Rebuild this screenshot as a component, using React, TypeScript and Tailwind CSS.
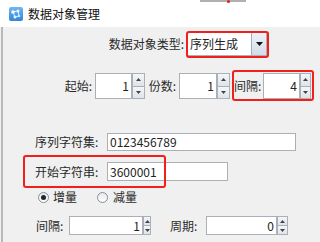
import React from 'react';

const Up = () => (
  <svg width="5" height="3" viewBox="0 0 5 3">
    <path d="M0 3 L2.5 0 L5 3 Z" fill="#444" />
  </svg>
);

const Down = () => (
  <svg width="5" height="3" viewBox="0 0 5 3">
    <path d="M0 0 L5 0 L2.5 3 Z" fill="#444" />
  </svg>
);

const Spinner = ({ value, box, btn, h }: { value: string; box: string; btn: string; h: string }) => (
  <div className={`flex ${h}`}>
    <div className={`${box} h-full bg-white border border-[#abb0b7] flex items-center justify-end pr-[2px] text-[12px] text-[#222]`}>
      {value}
    </div>
    <div className={`${btn} h-full flex flex-col`}>
      <div className="flex-1 flex items-center justify-center border border-[#a9b0b8] bg-gradient-to-b from-[#f4f6f9] to-[#dfe4ea]">
        <Up />
      </div>
      <div className="flex-1 flex items-center justify-center border border-t-0 border-[#a9b0b8] bg-gradient-to-b from-[#f4f6f9] to-[#dfe4ea]">
        <Down />
      </div>
    </div>
  </div>
);

const Radio = ({ checked }: { checked?: boolean }) => (
  <div className="w-[11px] h-[11px] rounded-full border border-[#8a8f96] bg-gradient-to-b from-[#e6e8eb] to-[#ffffff] flex items-center justify-center">
    {checked && <div className="w-[5px] h-[5px] rounded-full bg-[#1d2530]" />}
  </div>
);

const AppIcon = () => (
  <svg width="14" height="14" viewBox="0 0 14 14">
    <defs>
      <linearGradient id="ig" x1="0" y1="0" x2="0" y2="1">
        <stop offset="0" stopColor="#6fb8f4" />
        <stop offset="1" stopColor="#2f86dc" />
      </linearGradient>
    </defs>
    <rect x="0" y="0" width="14" height="14" rx="2" fill="url(#ig)" />
    <path d="M4 5 L9 4 M4 5 L6 10 M9 4 L10 9 M6 10 L10 9" stroke="#dff0ff" strokeWidth="1" />
    <circle cx="4" cy="5" r="1.8" fill="#ffffff" />
    <circle cx="9" cy="4" r="1.5" fill="#e8f4ff" />
    <circle cx="6" cy="10" r="1.5" fill="#e8f4ff" />
    <circle cx="10" cy="9" r="1.3" fill="#cfe6fb" />
  </svg>
);

export default function App() {
  return (
    <div className="relative w-[320px] h-[242px] overflow-hidden whitespace-nowrap bg-[#f0f0f0] font-['Noto_Sans_CJK_SC',sans-serif] text-[12px] leading-none text-[#2a2a2a]">
      {/* title bar */}
      <div className="h-[27px] bg-white flex items-center pl-[9px]">
        <AppIcon />
        <span className="ml-[5px] text-[12px] text-[#111]">数据对象管理</span>
      </div>

      {/* body */}
      <div className="ml-[1px] h-[215px] border-l-2 border-[#b9b9b9] flex flex-col">
        {/* type */}
        <div className="mt-[5px] flex items-center h-[24px]">
          <div className="w-[181px] flex justify-end">数据对象类型:</div>
          <div className="ml-[3px] w-[80px] h-full bg-white border border-[#abb0b7] flex">
            <div className="flex-1 flex items-center pl-[2px] text-[12px] text-[#222]">序列生成</div>
            <div className="w-[15px] h-full border-l border-[#9fb0c4] bg-gradient-to-b from-[#eef3f8] to-[#d3dde8] flex items-center justify-center">
              <svg width="7" height="4" viewBox="0 0 7 4">
                <path d="M0 0 L7 0 L3.5 4 Z" fill="#111" />
              </svg>
            </div>
          </div>
        </div>

        {/* start / count / interval */}
        <div className="mt-[17px] flex items-center h-[26px] pl-[59px]">
          <div className="w-[30px] text-right">起始:</div>
          <div className="ml-[3px]">
            <Spinner value="1" box="w-[37px]" btn="w-[13px]" h="h-[26px]" />
          </div>
          <div className="w-[31px] text-right">份数:</div>
          <div className="ml-[3px]">
            <Spinner value="1" box="w-[38px]" btn="w-[13px]" h="h-[26px]" />
          </div>
          <div className="ml-[4px] w-[29px]">间隔:</div>
          <Spinner value="4" box="w-[37px]" btn="w-[11px]" h="h-[26px]" />
        </div>

        {/* charset */}
        <div className="mt-[34px] flex items-center h-[18px] pl-[32px]">
          <div className="w-[72px]">序列字符集:</div>
          <div className="w-[189px] h-full bg-white border border-[#abb0b7] flex items-center pl-[2px] text-[#222]">0123456789</div>
        </div>

        {/* start string */}
        <div className="mt-[11px] flex items-center h-[19px] pl-[32px]">
          <div className="w-[72px]">开始字符串:</div>
          <div className="w-[121px] h-full bg-white border border-[#abb0b7] flex items-center pl-[2px] text-[#222]">3600001</div>
        </div>

        {/* radios */}
        <div className="mt-[8px] flex items-center h-[16px] pl-[35px]">
          <Radio checked />
          <span className="ml-[4px]">增量</span>
          <div className="ml-[20px]">
            <Radio />
          </div>
          <span className="ml-[5px]">减量</span>
        </div>

        {/* interval / period */}
        <div className="mt-[11px] flex items-center h-[19px] pl-[33px]">
          <div className="w-[33px]">间隔:</div>
          <Spinner value="1" box="w-[74px]" btn="w-[8px]" h="h-[19px]" />
          <div className="ml-[19px] w-[36px]">周期:</div>
          <Spinner value="0" box="w-[71px]" btn="w-[11px]" h="h-[19px]" />
        </div>
      </div>

      {/* annotation overlays */}
      <div className="absolute left-[200px] top-0 w-[46px] h-[2px] bg-[#b0b0b0]" />
      <div className="absolute left-[227px] top-0 w-[3px] h-[3px] rounded-full bg-[#d42020]" />
      <div className="absolute left-[186px] top-[31px] w-[83px] h-[27px] border-2 border-[#f0201c] rounded-[3px]" />
      <div className="absolute left-[232px] top-[70px] w-[82px] h-[31px] border-2 border-[#f0201c] rounded-[3px]" />
      <div className="absolute left-[23px] top-[155px] w-[143px] h-[33px] border-2 border-[#f0201c] rounded-[3px]" />
    </div>
  );
}
